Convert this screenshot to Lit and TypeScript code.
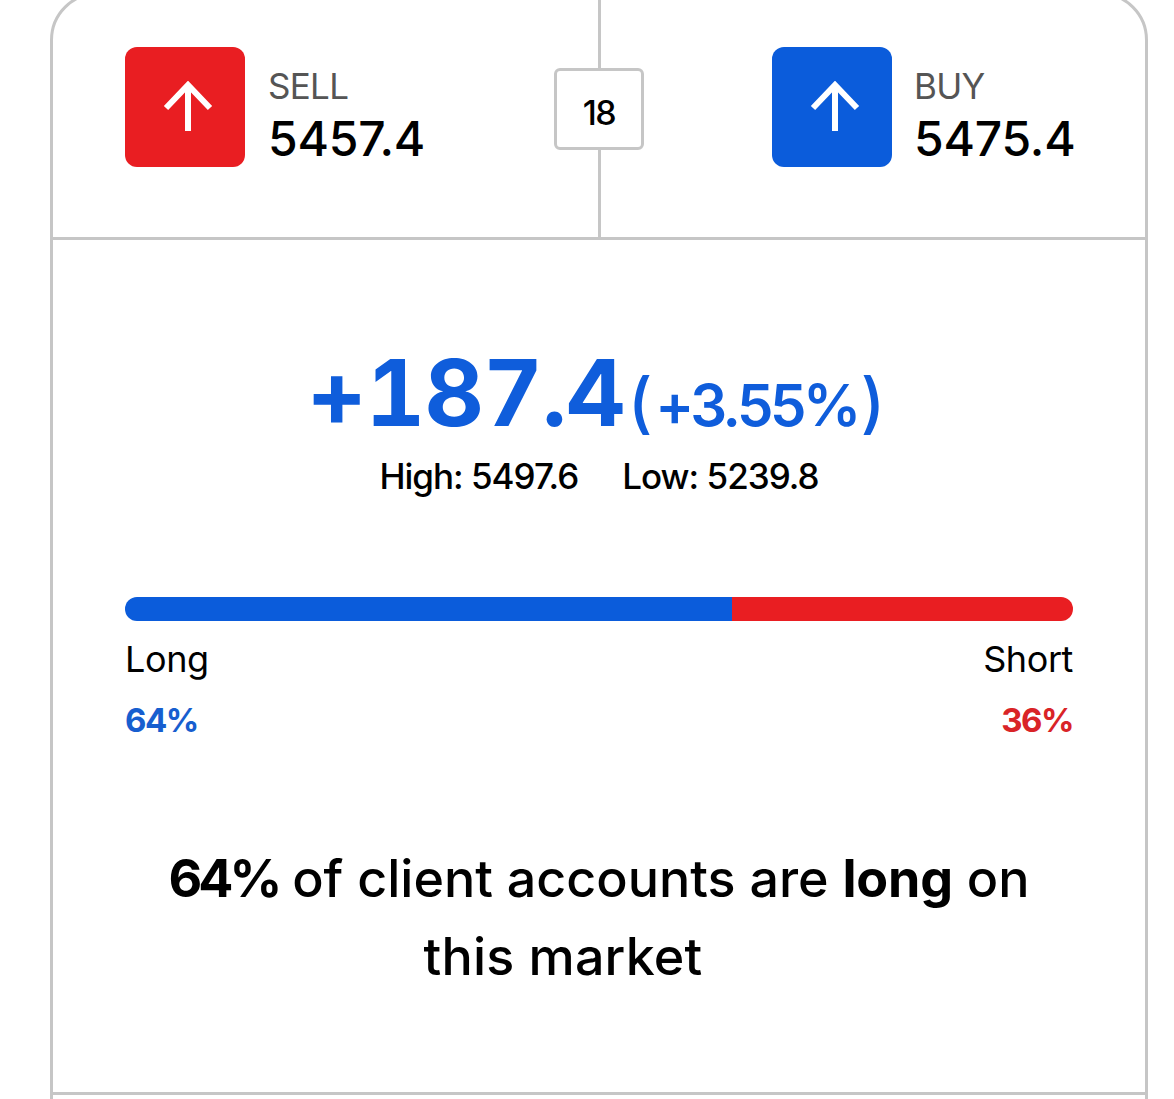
import { LitElement, html, css } from "lit";
import { customElement } from "lit/decorators.js";

const arrow = html`<svg class="arrow" viewBox="0 0 52 52" width="52" height="52" aria-hidden="true"><path d="M26 50V5M4 27 26 4l22 23" fill="none" stroke="#fff" stroke-width="6"/></svg>`;

@customElement("app-root")
export class AppRoot extends LitElement {
  static styles = css`
    :host { display: block; height: 1099px; overflow: hidden; background: #fff; color: #000; font-family: Inter, "Liberation Sans", sans-serif; }
    .card { box-sizing: border-box; width: 1098px; height: 1200px; margin: -8px 0 0 50px; border: 3px solid #c6c6c6; border-radius: 48px; overflow: hidden; }
    .trade { position: relative; display: grid; grid-template-columns: 548px 1fr; height: 242px; border-bottom: 3px solid #c6c6c6; }
    .side { box-sizing: border-box; display: flex; gap: 23px; padding-top: 52px; }
    .sell { padding-left: 72px; border-right: 3px solid #c6c6c6; }
    .buy { padding-left: 171px; gap: 22px; }
    .icon { width: 120px; height: 120px; border-radius: 12px; display: flex; align-items: center; justify-content: center; padding-left: 5px; box-sizing: border-box; }
    .red { background: #e91e22; }
    .blue { background: #0b5cdb; }
    .arrow { display: block; }
    .quote { display: flex; flex-direction: column; padding-top: 19px; }
    .label { font-size: 35px; line-height: 40px; color: #555; letter-spacing: -0.7px; }
    .price { font-size: 48px; line-height: 66px; font-weight: 500; letter-spacing: -0.2px; }
    .spread { position: absolute; left: 501px; top: 73px; box-sizing: border-box; width: 90px; height: 82px; padding-top: 6px; background: #fff; border: 3px solid #c6c6c6; border-radius: 6px; display: flex; align-items: center; justify-content: center; font-size: 34px; font-weight: 500; letter-spacing: -1.5px; }
    .stats { padding: 0 72px; }
    .change { display: flex; justify-content: center; align-items: baseline; margin-top: 98px; padding-right: 6px; color: #0f5ddb; font-weight: 700; line-height: 110px; white-space: nowrap; }
    .big { font-size: 92px; font-variant-numeric: tabular-nums; letter-spacing: -0.7px; }
    .pct { font-size: 58px; font-weight: 600; letter-spacing: -3.5px; margin-left: 3px; }
    .paren { font-size: 66px; font-weight: 500; letter-spacing: 0; }
    .open { margin-right: 3px; }
    .close { margin-left: 3px; }
    .range { display: flex; justify-content: center; gap: 44px; font-size: 35px; font-weight: 500; line-height: 40px; letter-spacing: -1px; margin-top: -4px; }
    .bar { display: flex; height: 24px; border-radius: 12px; overflow: hidden; margin-top: 101px; }
    .bar i { display: block; }
    .long { width: 64%; background: #0b5cdb; }
    .short { width: 36%; background: #e91e22; }
    .legend { display: flex; justify-content: space-between; margin-top: 17px; }
    .legend > div:last-child { text-align: right; }
    .name { font-size: 36px; line-height: 42px; letter-spacing: -0.4px; }
    .val { font-size: 33px; line-height: 42px; font-weight: 700; letter-spacing: -1.5px; margin-top: 19px; }
    .vb { color: #175ecf; }
    .vr { color: #d92427; }
    .note { font-size: 52px; line-height: 78px; font-weight: 500; text-align: center; margin-top: 99px; }
    .note b { font-weight: 700; letter-spacing: -0.2px; }
    .note b:first-child { letter-spacing: -4px; }
    .note span { display: block; padding-right: 72px; letter-spacing: 0.2px; }
    .rule { height: 3px; background: #c6c6c6; margin-top: 96px; }
  `;

  render() {
    return html`
      <div class="card">
        <div class="trade">
          <div class="side sell">
            <div class="icon red">${arrow}</div>
            <div class="quote"><div class="label">SELL</div><div class="price">5457.4</div></div>
          </div>
          <div class="side buy">
            <div class="icon blue">${arrow}</div>
            <div class="quote"><div class="label">BUY</div><div class="price">5475.4</div></div>
          </div>
          <div class="spread">18</div>
        </div>
        <div class="stats">
          <div class="change"><span class="big">+187.4</span><span class="pct"><span class="paren open">(</span>+3.55%<span class="paren close">)</span></span></div>
          <div class="range"><span>High: 5497.6</span><span>Low: 5239.8</span></div>
          <div class="bar"><i class="long"></i><i class="short"></i></div>
          <div class="legend">
            <div><div class="name">Long</div><div class="val vb">64%</div></div>
            <div><div class="name">Short</div><div class="val vr">36%</div></div>
          </div>
          <div class="note"><b>64%</b> of client accounts are <b>long</b> on<span>this market</span></div>
        </div>
        <div class="rule"></div>
      </div>
    `;
  }
}
